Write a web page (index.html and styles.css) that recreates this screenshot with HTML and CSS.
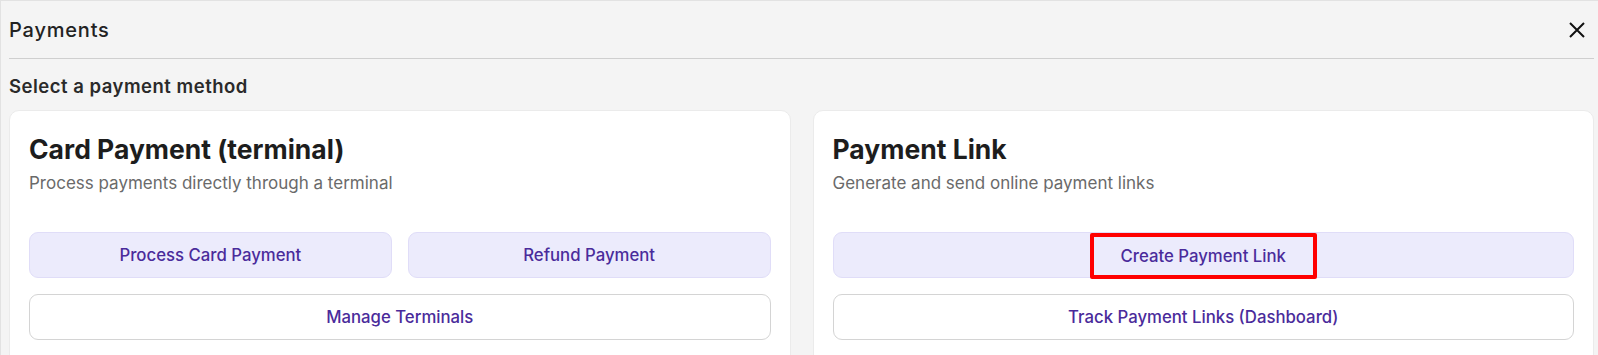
FILE: index.html
```html
<!DOCTYPE html>
<html lang="en">
<head>
  <meta charset="UTF-8">
  <meta name="viewport" content="width=device-width, initial-scale=1.0">
  <title>Payments</title>
  <link rel="stylesheet" href="styles.css">
</head>
<body>
  <div class="panel">
    <div class="panel-header">
      <h1>Payments</h1>
      <button class="close-btn" aria-label="Close">
        <svg width="16" height="16" viewBox="0 0 16 16">
          <path d="M1 1 L15 15 M15 1 L1 15" stroke="#111" stroke-width="2" fill="none"/>
        </svg>
      </button>
    </div>

    <h2 class="section-title">Select a payment method</h2>

    <div class="methods">
      <div class="card">
        <h3>Card Payment (terminal)</h3>
        <p class="card-sub">Process payments directly through a terminal</p>
        <div class="actions">
          <div class="row">
            <button class="btn btn-soft">Process Card Payment</button>
            <button class="btn btn-soft">Refund Payment</button>
          </div>
          <button class="btn btn-outline">Manage Terminals</button>
        </div>
      </div>

      <div class="card">
        <h3>Payment Link</h3>
        <p class="card-sub">Generate and send online payment links</p>
        <div class="actions">
          <button class="btn btn-soft"><span class="highlight">Create Payment Link</span></button>
          <button class="btn btn-outline">Track Payment Links (Dashboard)</button>
        </div>
      </div>
    </div>
  </div>
</body>
</html>
```

FILE: styles.css
```css
body {
  margin: 0;
  padding: 0;
  font-family: Inter, "Noto Sans", sans-serif;
  background: #f4f4f4;
  color: #1f1f1f;
  overflow: hidden;
}
.panel {
  height: 355px;
  box-sizing: border-box;
  overflow: hidden;
  border-top: 1px solid #e2e2e2;
  border-left: 1px solid #e2e2e2;
  padding: 0 4px 0 8px;
  background: #f4f4f4;
}
.panel-header {
  display: flex;
  justify-content: space-between;
  align-items: center;
  height: 57px;
  border-bottom: 1px solid #cfcfcf;
}
.panel-header h1 {
  margin: 0;
  font-size: 20px;
  font-weight: 500;
  letter-spacing: 0.8px;
  color: #222;
}
.close-btn {
  background: none;
  border: none;
  padding: 0;
  margin-right: 9px;
  width: 16px;
  height: 16px;
  cursor: pointer;
}
.section-title {
  margin: 16px 0 13px;
  font-size: 18.5px;
  font-weight: 600;
  letter-spacing: 0.5px;
  color: #2a2a2a;
}
.methods {
  display: grid;
  grid-template-columns: 1fr 1fr;
  gap: 22px;
}
.card {
  background: #fff;
  border: 1px solid #ebebeb;
  border-radius: 10px;
  padding: 22px 19px 40px;
}
.card h3 {
  margin: 0;
  font-size: 26.5px;
  font-weight: 700;
  color: #1d1d1d;
}
.card-sub {
  margin: 8px 0 39px;
  font-size: 17px;
  color: #6a6a6a;
}
.actions {
  display: flex;
  flex-direction: column;
  gap: 16px;
}
.row {
  display: grid;
  grid-template-columns: 1fr 1fr;
  gap: 16px;
}
.btn {
  height: 46px;
  padding: 0;
  border-radius: 9px;
  font-family: inherit;
  font-size: 16.75px;
  font-weight: 500;
  color: #4a2b9b;
  cursor: pointer;
}
.btn-soft {
  background: #ecebfc;
  border: 1px solid #e0ddf8;
}
.btn-outline {
  background: #fff;
  border: 1px solid #d4d4d4;
}
.highlight {
  display: inline-block;
  box-sizing: border-box;
  height: 46px;
  line-height: 38px;
  padding: 0 27px;
  border: 4px solid #ff0000;
  border-radius: 2px;
}
```
